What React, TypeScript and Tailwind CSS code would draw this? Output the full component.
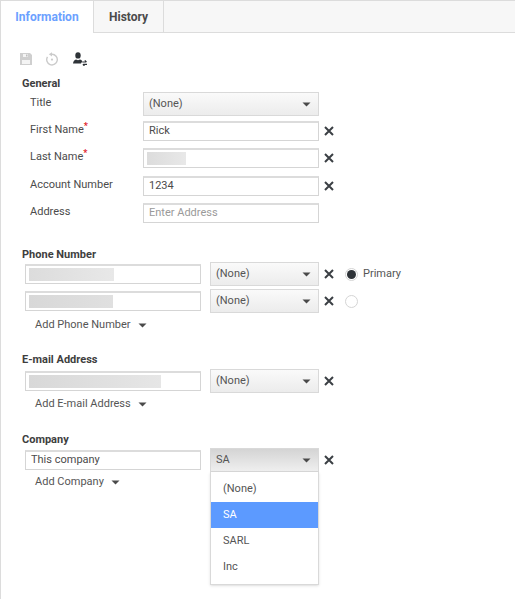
import { useState } from "react";

const font = "font-['Roboto',sans-serif]";

const Caret = () => (
  <svg width="9" height="5" viewBox="0 0 9 5" className="shrink-0">
    <path d="M0.5 0.5h8L4.5 4.5z" fill="#4a4a4a" />
  </svg>
);

const Clear = () => (
  <svg width="10" height="10" viewBox="0 0 10 10" className="shrink-0">
    <path d="M1 1l8 8M9 1l-8 8" stroke="#3b3f44" strokeWidth="2" />
  </svg>
);

const Select = ({ value, wide, open }: { value: string; wide?: boolean; open?: boolean }) => (
  <div
    className={`flex h-6 items-center justify-between border border-[#d9d9d9] pl-[5px] pr-[7px] text-[11px] text-[#555] ${
      wide ? "w-[176px]" : "w-[109px]"
    } ${open ? "bg-gradient-to-b from-[#d4d4d4] to-[#efefef]" : "bg-gradient-to-b from-[#fafafa] to-[#ececec]"}`}
  >
    <span>{value}</span>
    <Caret />
  </div>
);

const Input = ({ value, placeholder, children }: { value?: string; placeholder?: string; children?: React.ReactNode }) => (
  <div className="flex h-5 w-[176px] items-center border border-[#d5d5d5] border-t-2 border-t-[#dcdcdc] bg-white pl-[5px] text-[11px] text-[#4b4b4b]">
    {value}
    {placeholder && <span className="text-[#9a9a9a]">{placeholder}</span>}
    {children}
  </div>
);

const Blur = ({ w, from = "#dcdcdc", to = "#e8e8e8" }: { w: string; from?: string; to?: string }) => (
  <div className={`-ml-0.5 h-[13px] ${w}`} style={{ background: `linear-gradient(90deg, ${from}, ${to})` }} />
);

const Field = ({ label, required, children, clear, className = "" }: { label: string; required?: boolean; children: React.ReactNode; clear?: boolean; className?: string }) => (
  <div className={`flex items-center ${className}`}>
    <div className="w-[122px] pl-[9px] text-[11px] leading-4 text-[#4b4b4b] -mt-[2px]">
      {label}
      <span className={required ? "relative -top-1 text-[9px] font-bold leading-none text-[#e0202a]" : "hidden"}>*</span>
    </div>
    {children}
    {clear && (
      <span className="ml-[5px]">
        <Clear />
      </span>
    )}
  </div>
);

const Heading = ({ children, className = "" }: { children: React.ReactNode; className?: string }) => (
  <div className={`pl-[1px] text-[11px] font-bold leading-4 text-[#3e3e3e] ${className}`}>{children}</div>
);

const AddLink = ({ label, className = "" }: { label: string; className?: string }) => (
  <div className={`flex items-center gap-[7px] pl-[14px] text-[11px] leading-4 text-[#555] ${className}`}>
    {label}
    <Caret />
  </div>
);

const MultiRow = ({ input, select, extra }: { input: React.ReactNode; select: React.ReactNode; extra?: React.ReactNode }) => (
  <div className="relative flex items-center pl-1">
    {input}
    <div className="ml-[9px]">{select}</div>
    <span className="ml-[5px]">
      <Clear />
    </span>
    {extra}
  </div>
);

const Toolbar = () => (
  <div className="flex items-center gap-[12px] pl-[18px]">
    <svg width="14" height="14" viewBox="0 0 14 14">
      <path d="M1 1h10l2 2v10H1z" fill="#cfcfcf" />
      <path d="M4 2h5v3H4zM3 8h8v4H3z" fill="#f4f4f4" />
      <path d="M7 2.500h1.500v2H7z" fill="#bdbdbd" />
    </svg>
    <svg width="14" height="14" viewBox="0 0 14 14">
      <path d="M7 2.300a5.300 5.300 0 1 1-4.500 2.500" fill="none" stroke="#cbcbcb" strokeWidth="1.400" />
      <path d="M7 0.200v4.200L3.800 2.300z" fill="#cbcbcb" />
      <circle cx="7" cy="7.600" r="1.100" fill="#cbcbcb" />
    </svg>
    <svg width="16" height="14" viewBox="0 0 16 14" className="ml-px">
      <ellipse cx="6" cy="3.400" rx="2.700" ry="3.200" fill="#2e3338" />
      <path d="M1 11.500c.2-2.400 1.500-3.400 3-4l2 .8 2-.8c1 .3 1.800.8 2.300 1.700L9 11.500z" fill="#2e3338" />
      <path d="M10.200 10h3.800M12.800 8.300l1.700 1.700M15 12.400h-3.800M12.500 14l-1.700-1.600" stroke="#2e3338" strokeWidth="1.100" fill="none" />
    </svg>
  </div>
);

export default function App() {
  const [tab] = useState("Information");
  return (
    <div className={`${font} h-[599px] w-[515px] overflow-hidden border-l border-t border-[#dcdcdc] bg-white`}>
      <div className="flex h-[32px] border-b border-[#dcdcdc] bg-[#f7f7f7] text-[12px] font-bold">
        <div className={`-mb-px flex w-[92px] items-center justify-center bg-white ${tab === "Information" ? "text-[#6ba1ff]" : ""}`}>Information</div>
        <div className="flex w-[71px] items-center justify-center border-x border-[#dcdcdc] text-[#4a4a4a]">History</div>
      </div>

      <div className="pt-[19px]">
        <Toolbar />
        <div className="pl-5 pt-[10px]">
          <Heading>General</Heading>
          <Field label="Title">
            <Select value="(None)" wide />
          </Field>
          <Field label="First Name" required clear className="mt-[5px]">
            <Input value="Rick" />
          </Field>
          <Field label="Last Name" required clear className="mt-[7px]">
            <Input>
              <Blur w="w-[39px]" />
            </Input>
          </Field>
          <Field label="Account Number" clear className="mt-[8px]">
            <Input value="1234" />
          </Field>
          <Field label="Address" className="mt-[7px]">
            <Input placeholder="Enter Address" />
          </Field>

          <Heading className="mt-[24px]">Phone Number</Heading>
          <div className="-mt-[1px] flex flex-col gap-[3px]">
            <MultiRow
              input={
                <Input>
                  <Blur w="w-[85px]" />
                </Input>
              }
              select={<Select value="(None)" />}
              extra={
                <div className="ml-[11px] flex items-center gap-[5px] text-[11px] text-[#555]">
                  <span className="flex h-[13px] w-[13px] items-center justify-center rounded-full border border-[#d5d5d5]">
                    <span className="h-[9px] w-[9px] rounded-full bg-[#2e3338]" />
                  </span>
                  Primary
                </div>
              }
            />
            <MultiRow
              input={
                <Input>
                  <Blur w="w-[84px]" from="#d8d8d8" to="#e0e0e0" />
                </Input>
              }
              select={<Select value="(None)" />}
              extra={<span className="ml-[11px] h-[13px] w-[13px] rounded-full border border-[#d5d5d5]" />}
            />
          </div>
          <AddLink label="Add Phone Number" className="mt-[4px]" />

          <Heading className="mt-[19px]">E-mail Address</Heading>
          <div className="mt-[1px]">
            <MultiRow
              input={
                <Input>
                  <Blur w="w-[132px]" from="#d8d8d8" to="#e6e6e6" />
                </Input>
              }
              select={<Select value="(None)" />}
            />
          </div>
          <AddLink label="Add E-mail Address" className="mt-[3px]" />

          <Heading className="mt-[20px]">Company</Heading>
          <div>
            <MultiRow
              input={<Input value="This company" />}
              select={
                <div className="relative">
                  <Select value="SA" open />
                  <div className="absolute left-0 top-6 z-10 w-[109px] border border-t-0 border-[#d9d9d9] bg-white pb-[4px] pt-[4px] text-[11px] text-[#555] shadow-sm">
                    <div className="flex h-[26px] items-center pl-3">(None)</div>
                    <div className="flex h-[26px] items-center bg-[#5c9aff] pl-3 text-white">SA</div>
                    <div className="flex h-[26px] items-center pl-3">SARL</div>
                    <div className="flex h-[26px] items-center pl-3">Inc</div>
                  </div>
                </div>
              }
            />
          </div>
          <AddLink label="Add Company" className="mt-[2px]" />
        </div>
      </div>
    </div>
  );
}
